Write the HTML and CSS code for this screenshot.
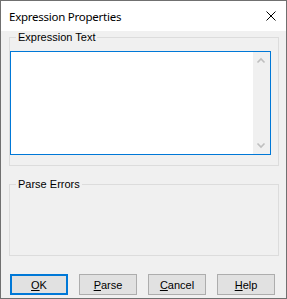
FILE: index.html
```html
<!DOCTYPE html>
<html lang="en">
<head>
  <meta charset="UTF-8">
  <title>Expression Properties</title>
  <link rel="stylesheet" href="styles.css">
</head>
<body>

  <div class="dialog">
    <div class="titlebar">
      <span class="title">Expression Properties</span>
      <svg class="close" width="10" height="10" viewBox="0 0 10 10">
        <path d="M0.5 0.5 L9.5 9.5 M9.5 0.5 L0.5 9.5" stroke="#000" stroke-width="1" fill="none"/>
      </svg>
    </div>

    <div class="content">
      <fieldset class="group group-expr">
        <legend>Expression Text</legend>
        <div class="editbox">
          <div class="edit-area"></div>
          <div class="scrollbar">
            <div class="scroll-btn">
              <svg width="17" height="17" viewBox="0 0 17 17">
                <polyline points="4.5,10.5 8,7 11.5,10.5" stroke="#bfbfbf" stroke-width="1.6" fill="none"/>
              </svg>
            </div>
            <div class="scroll-btn">
              <svg width="17" height="17" viewBox="0 0 17 17">
                <polyline points="4.5,6.5 8,10 11.5,6.5" stroke="#bfbfbf" stroke-width="1.6" fill="none"/>
              </svg>
            </div>
          </div>
        </div>
      </fieldset>

      <fieldset class="group group-errors">
        <legend>Parse Errors</legend>
      </fieldset>

      <div class="buttons">
        <button class="btn btn-default"><u>O</u>K</button>
        <button class="btn"><u>P</u>arse</button>
        <button class="btn"><u>C</u>ancel</button>
        <button class="btn"><u>H</u>elp</button>
      </div>
    </div>
  </div>

</body>
</html>
```

FILE: styles.css
```css
* {
  box-sizing: border-box;
}

body {
  margin: 0;
  padding: 0;
  background: #f0f0f0;
  font-family: 'Liberation Sans', Arial, sans-serif;
  font-size: 11px;
}

.dialog {
  width: 287px;
  height: 299px;
  border: 1px solid #707070;
  background: #f0f0f0;
  display: flex;
  flex-direction: column;
}

.titlebar {
  height: 30px;
  background: #fff;
  display: flex;
  align-items: center;
  justify-content: space-between;
  padding: 0 10px 0 8px;
}

.title {
  font-family: 'Noto Sans', sans-serif;
  font-size: 11.5px;
  letter-spacing: -0.25px;
  color: #000;
}

.close {
  display: block;
}

.content {
  flex: 1;
  display: flex;
  flex-direction: column;
}

.group {
  margin: 0 7px 0 8px;
  padding: 0;
  border: 1px solid #dcdcdc;
  min-width: 0;
}

.group legend {
  margin-left: 6px;
  padding: 0 2px;
  font-size: 11px;
  line-height: 13px;
  color: #000;
}

.group-expr {
  padding: 7px 7px 10px 0;
}

.group-errors {
  margin-top: 12px;
  height: 78px;
}

.editbox {
  height: 104px;
  border: 1px solid #0078d7;
  background: #fff;
  display: flex;
}

.edit-area {
  flex: 1;
}

.scrollbar {
  width: 17px;
  background: #f0f0f0;
  display: flex;
  flex-direction: column;
  justify-content: space-between;
}

.scroll-btn svg {
  display: block;
}

.buttons {
  display: flex;
  gap: 11px;
  margin-top: 18px;
  padding-left: 9px;
}

.btn {
  width: 58px;
  height: 21px;
  padding: 0;
  background: #e1e1e1;
  border: 1px solid #adadad;
  border-radius: 0;
  font-family: 'Liberation Sans', Arial, sans-serif;
  font-size: 11px;
  color: #000;
}

.btn u {
  text-underline-offset: 1px;
}

.btn-default {
  border: 2px solid #0078d7;
}
```
